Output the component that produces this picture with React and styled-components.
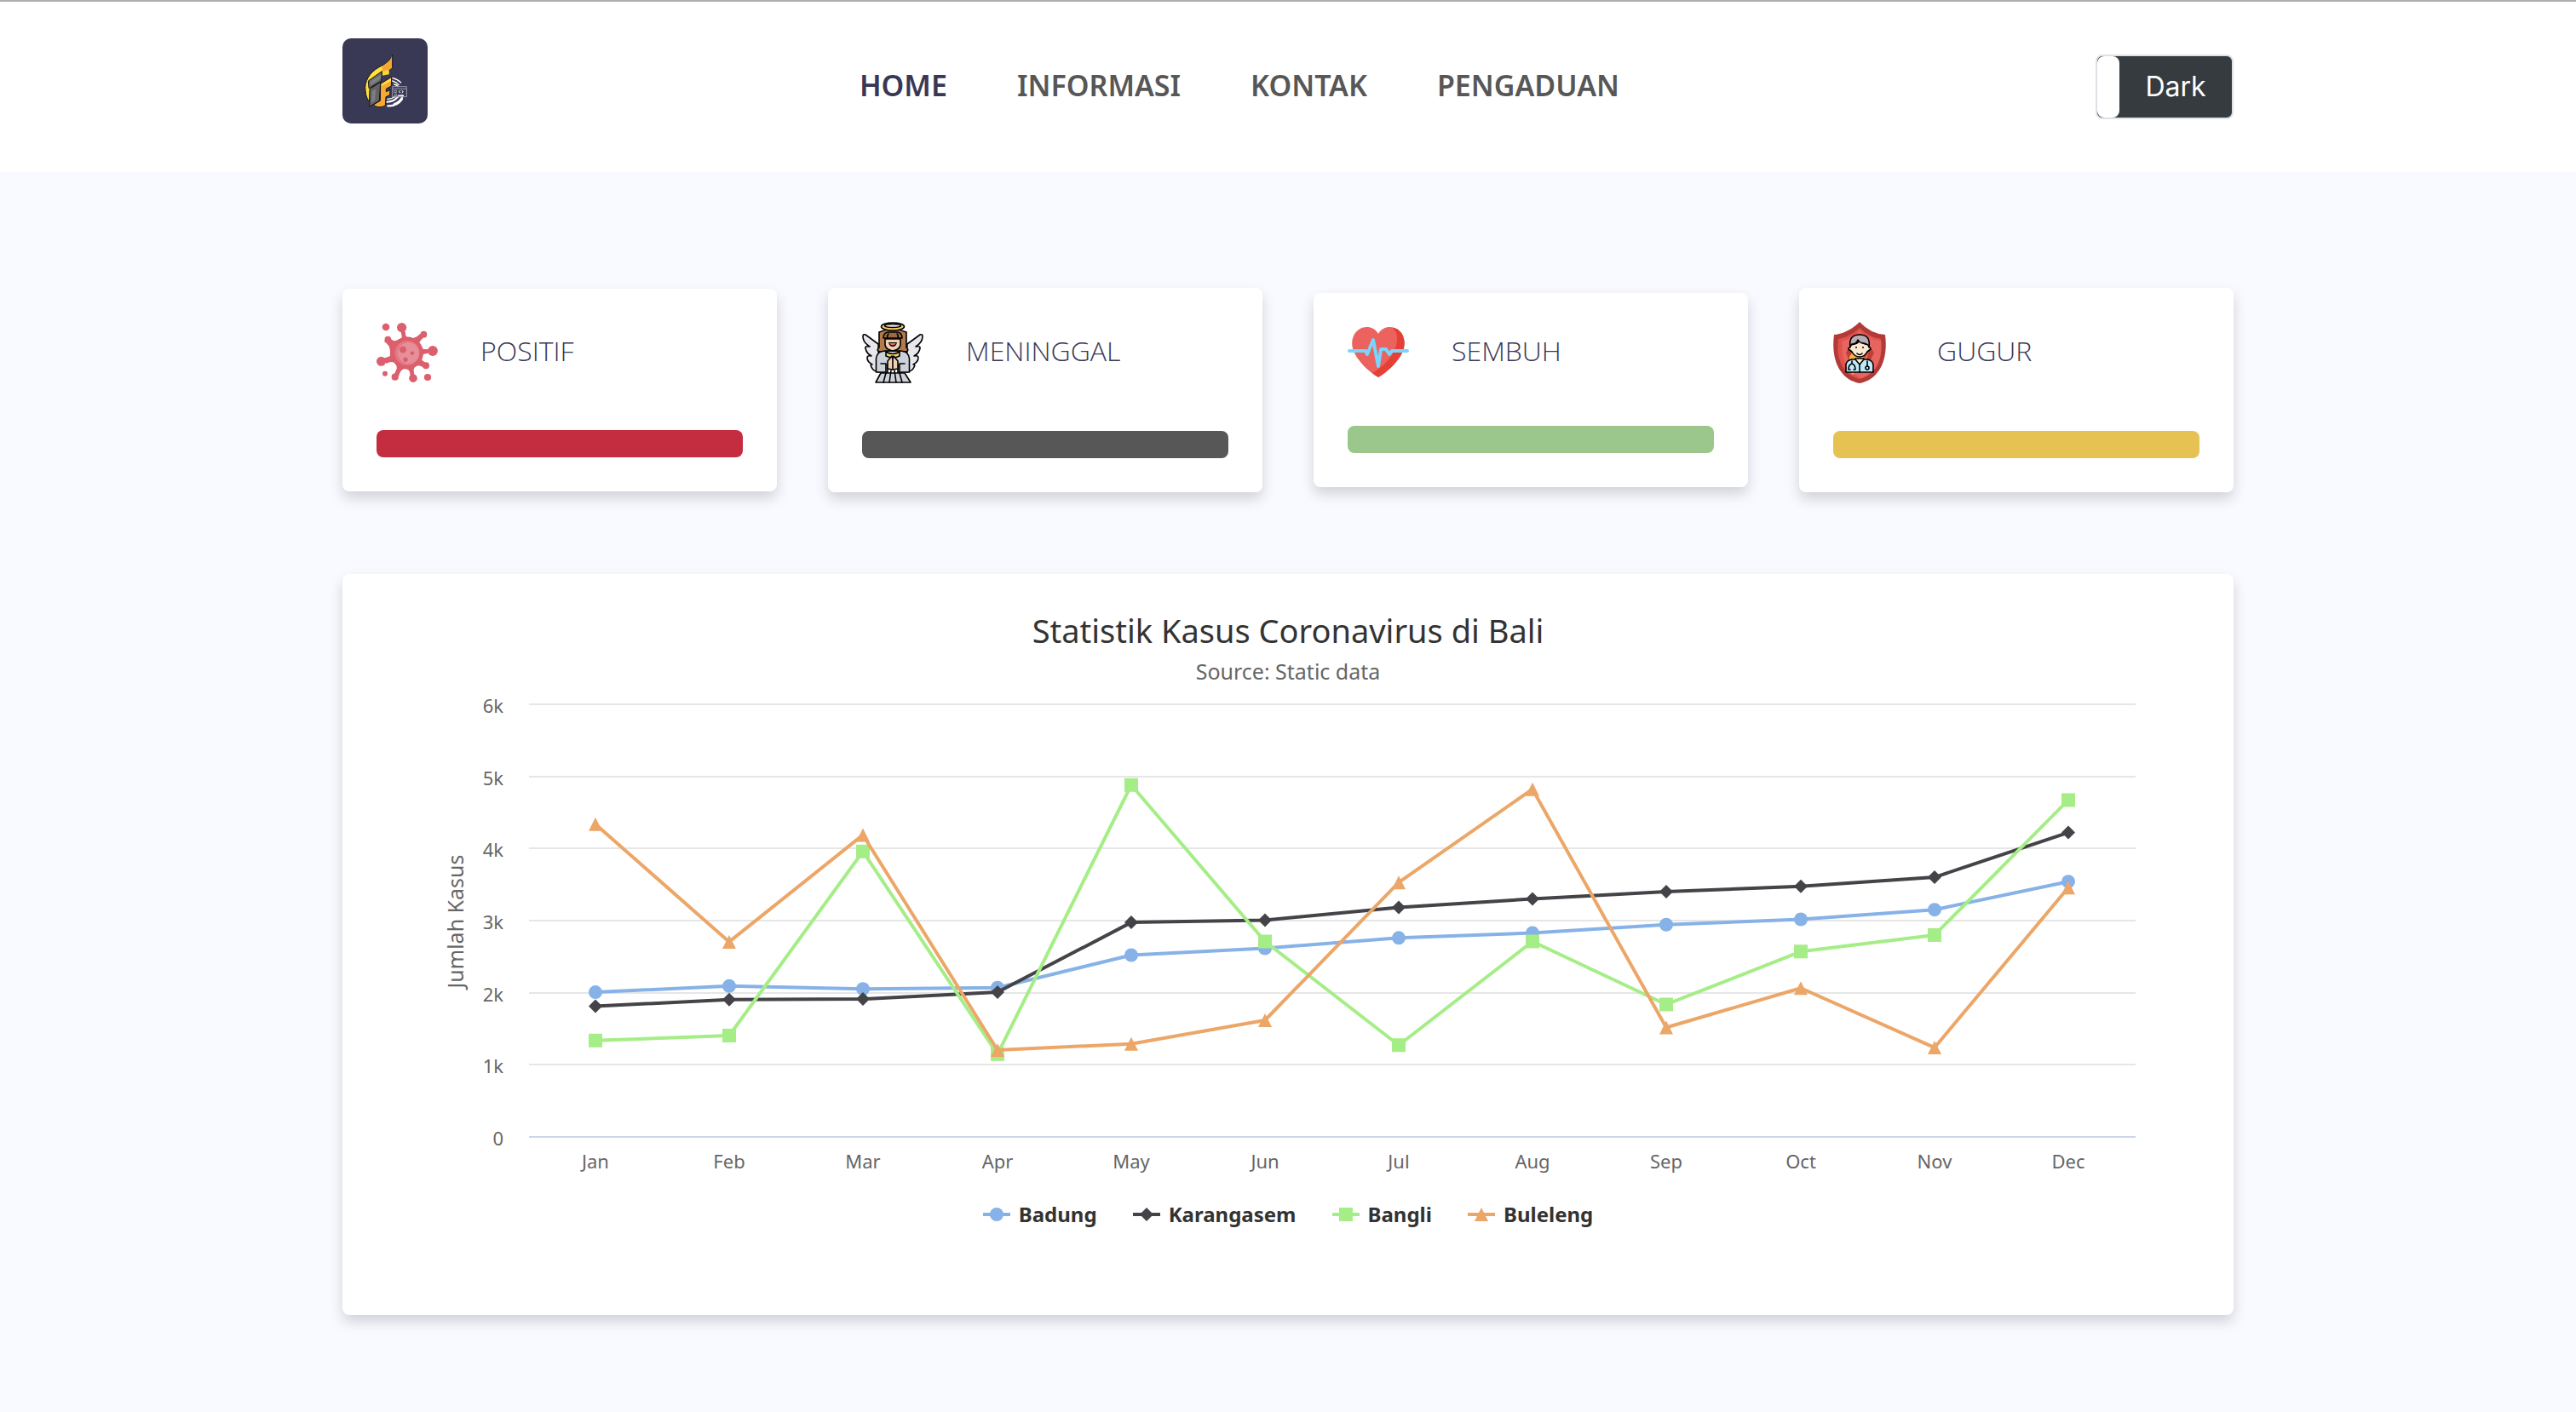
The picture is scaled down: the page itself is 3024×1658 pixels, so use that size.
import React, { useState } from "react";
import styled, { createGlobalStyle } from "styled-components";

const GlobalStyle = createGlobalStyle`
  *, *::before, *::after { box-sizing: border-box; }
  body {
    margin: 0;
    background: #f9faff;
    color: #333333;
    font-family: "Noto Sans", "Open Sans", sans-serif;
  }
  h1, h2, p, ul, figure { margin: 0; padding: 0; }
`;

const Header = styled.header`
  border-top: 2px solid #aeadb2;
  background: #ffffff;
`;

const Container = styled.div`
  width: 100%;
  max-width: 2280px;
  margin: 0 auto;
  padding: 0 30px;
`;

const Bar = styled(Container)`
  min-height: 200px;
  display: flex;
  align-items: center;
  justify-content: space-between;
`;

const Brand = styled.a`
  display: block;
  padding-bottom: 14px;
  line-height: 0;
`;

const Nav = styled.nav`
  display: flex;
  gap: 82px;
  padding: 0 52px 4px 0;
`;

const NavLink = styled.a`
  color: ${(p) => (p.$active ? "#383856" : "#575757")};
  font-size: 34px;
  font-weight: 600;
  line-height: 48px;
  text-decoration: none;
`;

const Toggle = styled.button`
  display: flex;
  align-items: stretch;
  width: 162px;
  height: 76px;
  padding: 0;
  overflow: hidden;
  border: 2px solid #dee2e6;
  border-radius: 8px;
  background: #363b3f;
  color: #ffffff;
  font-family: Inter, Roboto, sans-serif;
  font-size: 32px;
  line-height: 72px;
  cursor: pointer;
`;

const Knob = styled.span`
  width: 26px;
  border-radius: 8px;
  background: #ffffff;
`;

const ToggleText = styled.span`
  flex: 1;
  text-align: center;
`;

const Main = styled(Container).attrs({ as: "main" })`
  display: flex;
  flex-direction: column;
  gap: 96px;
  padding-top: 136px;
  padding-bottom: 114px;
`;

const Cards = styled.section`
  display: grid;
  grid-template-columns: repeat(4, 1fr);
  align-items: center;
  gap: 60px;
`;

const Panel = styled.div`
  border-radius: 8px;
  background: #ffffff;
  box-shadow: 0 8px 16px rgba(0, 0, 0, 0.16);
`;

const Card = styled(Panel)`
  display: grid;
  gap: 56px;
  padding: 40px;
`;

const CardHead = styled.div`
  display: grid;
  grid-template-columns: 122px 1fr;
  align-items: center;

  svg { display: block; }
`;

const CardTitle = styled.h2`
  padding-bottom: 4px;
  color: #383856;
  font-family: "Open Sans", "Noto Sans", sans-serif;
  font-size: 32px;
  font-weight: 300;
  line-height: 48px;
`;

const Strip = styled.div`
  height: 32px;
  border-radius: 8px;
  background: ${(p) => p.$color};
`;

const ChartPanel = styled(Panel).attrs({ as: "figure" })`
  padding: 42px 0 102px;
  text-align: center;
`;

const ChartTitle = styled.h1`
  font-size: 38px;
  font-weight: 400;
  line-height: 48px;
`;

const ChartSubtitle = styled.p`
  margin-top: 8px;
  color: #666666;
  font-size: 25px;
  line-height: 32px;
`;

const Plot = styled.svg`
  display: block;
  width: 100%;
  height: auto;
  font-size: 22px;
  fill: #666666;
`;

const Legend = styled.ul`
  display: flex;
  justify-content: center;
  gap: 42px;
  list-style: none;
`;

const LegendButton = styled.button`
  display: flex;
  align-items: center;
  gap: 10px;
  padding: 0;
  border: 0;
  background: none;
  color: #333333;
  font-family: inherit;
  font-size: 24px;
  font-weight: 700;
  line-height: 32px;
  opacity: ${(p) => (p.$off ? 0.4 : 1)};
  cursor: pointer;
`;

function Logo() {
  return (
    <svg width="100" height="100" viewBox="0 0 300 300" role="img" aria-label="Logo">
      <rect width="300" height="300" rx="30" fill="#3a3955" />
      <g fill="none" stroke="#ffffff" strokeLinecap="round">
        <path d="M176 140q18 4 30 16M176 150q14 4 22 14M182 162q10 2 14 8" strokeWidth="4" />
        <path d="M157 224q24-2 34-14t22-8q-8 20-32 30" strokeWidth="6" />
        <path d="M160 238q32 2 50-24" strokeWidth="7" />
        <path d="M158 214q16 0 30-10" strokeWidth="4" />
      </g>
      <g fill="none" stroke="#9b9aac" strokeWidth="3">
        <path d="M176 170h50v36h-50zM176 178h50M182 184h8v7h-8zM180 206l8-12 6 12M195 200h14" />
        <path d="M204 184l-5 4 5 4M209 184l5 4-5 4" stroke="#ffffff" />
      </g>
      <g stroke="#15141c" strokeWidth="3" strokeLinejoin="round">
        <path d="M176 58c-6 20-26 34-48 44-32 18-52 50-47 82 1 18 6 30 14 40l2-40 38-64h30l1-12 10-6z" fill="#ffe33b" />
        <path d="M174 62v42l-8 6-26 8v-20c18-8 30-20 34-36z" fill="#f6a833" stroke="none" />
        <path d="M140 116h25l-1 11-24 4z" fill="#fbd738" stroke="none" />
        <path d="M134 160l39-24-1 32-18 10v10l14-6-1 18-14 6-2 30c-12 9-34 8-42-2l24-14z" fill="#f6a833" />
        <path d="M137 162l34-22v10l-34 18z" fill="#ffe33b" stroke="none" />
        <path d="M91 150l48-34-2 34-44 26z" fill="#6b6b6e" />
        <path d="M96 178l38-24-4 66-35 21z" fill="#626265" />
        <path d="M102 150l34-22v12l-38 26zM104 186l14-8-4 42-12 8z" fill="#8a8a8c" stroke="none" opacity=".7" />
      </g>
    </svg>
  );
}

function VirusIcon() {
  return (
    <svg width="72" height="70" viewBox="0 0 72 70" aria-hidden="true">
      <path
        d="M36 35 30 6M36 35 55 14M36 35 66 33M36 35 58 50M36 35 43 65M36 35 22 63M36 35 6 45M36 35 14 20"
        stroke="#db5f6c"
        strokeWidth="4.6"
        strokeLinecap="round"
      />
      <g fill="#db5f6c">
        <path d="M28 19q4-3 2-8l4 0q-1 6 5 7 7 1 12-5l4 4q-7 5-4 10 2 5 9 4v5q-8 0-8 6 1 4 7 6l-3 5q-7-5-11-1-3 3 0 12h-5q0-10-6-10t-8 9l-5-2q5-8 1-13-3-4-11 0l-1-5q7-1 6-9 0-8-7-12l3-4q8 6 15 1z" />
        <circle cx="36" cy="35.5" r="19" />
        <circle cx="11" cy="5" r="4.3" />
        <circle cx="29.6" cy="5.6" r="5.6" />
        <circle cx="55.4" cy="13.7" r="3.9" />
        <circle cx="66" cy="33" r="5.9" />
        <circle cx="58" cy="50.3" r="4" />
        <circle cx="60" cy="64" r="4.1" />
        <circle cx="43" cy="65.2" r="4.8" />
        <circle cx="21.7" cy="63.7" r="4.1" />
        <circle cx="10" cy="59.7" r="3" />
        <circle cx="5.5" cy="45.3" r="5.5" />
        <circle cx="13.4" cy="19.7" r="3.9" />
      </g>
      <circle cx="36" cy="35.5" r="14.6" fill="#e27883" />
      <circle cx="37.5" cy="35.5" r="12.5" fill="#e78f98" />
      <g fill="#db5f6c">
        <circle cx="31" cy="31.6" r="3.9" />
        <circle cx="42" cy="35.7" r="2.3" />
        <circle cx="34" cy="43.3" r="2.7" />
      </g>
    </svg>
  );
}

function AngelIcon() {
  return (
    <svg width="72" height="72" viewBox="0 0 72 72" aria-hidden="true">
      <g stroke="#000000" strokeWidth="1.6" strokeLinejoin="round" strokeLinecap="round">
        <path d="M19 26 4 15q-3-1-3 2 0 7 8 12-6-1-5 2 1 6 7 9-5-1-5 2 0 5 6 8-3 0-1 3 2 5 9 6z" fill="#e7e7ec" />
        <path d="M53 26 68 15q3-1 3 2 0 7-8 12 6-1 5 2-1 6-7 9 5-1 5 2 0 5-6 8 3 0 1 3-2 5-9 6z" fill="#e7e7ec" />
        <path d="M22 60h28l7 11H16z" fill="#cdd2da" />
        <path d="M28 60l-3 11M44 60l3 11M34 57l-2 14M38 57l2 14" fill="none" />
        <path d="M16.500 59V43q1-8 9-9h21q8 1 9 9v16H42V50H30v9z" fill="#cdd2da" />
        <path d="M20 12q16-7 32 0v18q4 4-1 5l-6-1H27l-6 1q-5-1-1-5z" fill="#b27a4d" />
        <path d="M27 20h18v7q-1 6-9 7-8-1-9-7z" fill="#efd0b4" />
        <path d="M25 19q0-6 5-7h12q5 1 5 7z" fill="#9c6a42" />
        <path d="M30 19q-1-3 1-5M42 19q1-3-1-5" fill="none" />
        <path d="M28 35q8 5 16 0v5q-8 4-16 0z" fill="#f4cf62" />
        <path d="M30 55V46l5-6 1 3 1-3 5 6v9l-6 1z" fill="#efd0b4" />
        <path d="M36 43v12M22 49h6v9M50 49h-6v9" fill="none" />
        <ellipse cx="36" cy="5.5" rx="13.5" ry="4.5" fill="#f6cf65" />
        <ellipse cx="36" cy="4.5" rx="9.500" ry="2" fill="#e7e7ec" />
      </g>
      <path d="M31 24h10q-1 5-5 5t-5-5z" fill="#000000" />
      <path d="M32 25h8q-4 5-8 0z" fill="#ef6b5a" />
    </svg>
  );
}

function HeartIcon() {
  return (
    <svg width="72" height="60" viewBox="0 0 72 60" aria-hidden="true">
      <path d="M36 8C31-1 20-2 13 3 6 8 3 18 7 28c4 11 18 25 29 31 11-6 25-20 29-31 4-10 1-20-6-25C52-2 41-1 36 8z" fill="#ec625e" />
      <path d="M53 .7c3 .3 6 1.400 8 4 6 5 7 15 4 23.300-4 11-18 25-29 31-2-1-4-3-7-5C48 43 62 24 57 7z" fill="#e34137" />
      <path d="M2 28h19l2 4 7-17L36 46l3-20h6l4 6 3-4h18" fill="none" stroke="#7bd4fc" strokeWidth="4" strokeLinejoin="round" strokeLinecap="round" />
    </svg>
  );
}

function ShieldIcon() {
  return (
    <svg width="62" height="72" viewBox="0 0 62 72" aria-hidden="true">
      <path d="M31 0Q44 14 61 15C65 46 53 68 31 72 9 68-3 46 1 15 18 14 31 0 31 0z" fill="#b23a37" />
      <path d="M31 7Q42 18 56 20C59 45 50 62 31 67 12 62 3 45 6 20 20 18 31 7 31 7z" fill="#e2524d" />
      <path d="M31 10Q42 21 56 22C58 45 50 61 33 66 16 58 8 45 11 22 22 20 31 10 31 10z" fill="#e7645f" />
      <path d="M15 36l5-8h22l6 8-6 13H20z" fill="#c23c38" />
      <path d="M19 41l4-6 16 8 3-8-5 9H19zM21 60h4l-2 2z" fill="#f5b63e" />
      <g stroke="#000000" strokeWidth="1.6" strokeLinejoin="round" strokeLinecap="round">
        <path d="M15 59V50q1-5 7-6h18q6 1 7 6v9z" fill="#bfeaf8" />
        <path d="M26 43h10v1l-5 6-5-6z" fill="#fbe8d3" />
        <path d="M20 27q10-1 11-6 1 4 11 6v3q2 0 2 2l-4 3q-3 6-9 6-6 0-9-6l-4-3q0-2 2-2z" fill="#fbe8d3" />
        <path d="M20 29q-2-14 11-14Q44 15 42 29q-1-3-6-4-5 0-7-4-2 5-7 5z" fill="#b8acb3" />
        <path d="M31 50v9M22 46v3q-4 1-4 7h2M22 49q4 1 4 7h-2M40 46v6" fill="none" />
        <circle cx="40" cy="54" r="2" fill="#bfeaf8" />
        <path d="M28 37q3 3 6 0" fill="none" />
      </g>
      <circle cx="27" cy="30" r="1" />
      <circle cx="35" cy="30" r="1" />
    </svg>
  );
}

const NAV = ["HOME", "INFORMASI", "KONTAK", "PENGADUAN"];

const STATS = [
  { title: "POSITIF", color: "#c42c3f", Icon: VirusIcon },
  { title: "MENINGGAL", color: "#575757", Icon: AngelIcon },
  { title: "SEMBUH", color: "#9bc78d", Icon: HeartIcon },
  { title: "GUGUR", color: "#e5c251", Icon: ShieldIcon },
];

const MONTHS = ["Jan", "Feb", "Mar", "Apr", "May", "Jun", "Jul", "Aug", "Sep", "Oct", "Nov", "Dec"];

const SERIES = [
  { name: "Badung", color: "#87b2e8", shape: "circle", data: [2007, 2093, 2053, 2070, 2522, 2616, 2760, 2829, 2944, 3018, 3151, 3541] },
  { name: "Karangasem", color: "#434348", shape: "diamond", data: [1813, 1904, 1912, 2007, 2975, 3006, 3184, 3301, 3402, 3475, 3602, 4222] },
  { name: "Bangli", color: "#a5ed86", shape: "square", data: [1337, 1406, 3959, 1148, 4881, 2711, 1273, 2711, 1837, 2571, 2800, 4672] },
  { name: "Buleleng", color: "#eca667", shape: "triangle", data: [4337, 2706, 4188, 1205, 1290, 1618, 3530, 4823, 1518, 2064, 1239, 3458] },
];

const LEFT = 219;
const RIGHT = 2105;
const TOP = 23;
const BOTTOM = 531;
const STEP = (RIGHT - LEFT) / MONTHS.length;
const xOf = (i) => Math.floor(LEFT + STEP * (i + 0.5));
const yOf = (v) => BOTTOM - (v / 6000) * (BOTTOM - TOP);

function Marker({ shape, color, x, y }) {
  if (shape === "circle") return <circle cx={x} cy={y} r="8" fill={color} />;
  if (shape === "square") return <rect x={x - 8} y={y - 8} width="16" height="16" fill={color} />;
  const points =
    shape === "diamond"
      ? `${x},${y - 8} ${x + 8},${y} ${x},${y + 8} ${x - 8},${y}`
      : `${x},${y - 8} ${x + 8},${y + 8} ${x - 8},${y + 8}`;
  return <polygon points={points} fill={color} />;
}

function LineChart({ series }) {
  return (
    <Plot viewBox="0 0 2220 606" role="img" aria-label="Jumlah kasus per bulan">
      {[0, 1, 2, 3, 4, 5, 6].map((k) => {
        const y = Math.round(yOf(k * 1000));
        return (
          <g key={k}>
            <line x1={LEFT} x2={RIGHT} y1={y} y2={y} stroke={k ? "#e6e6e6" : "#ccd6eb"} strokeWidth="2" />
            <text x="189" y={y + 10} textAnchor="end">{k ? `${k}k` : "0"}</text>
          </g>
        );
      })}
      {MONTHS.map((m, i) => (
        <text key={m} x={xOf(i)} y="568" textAnchor="middle">{m}</text>
      ))}
      <text transform="translate(142 278) rotate(-90)" textAnchor="middle" fontSize="25">Jumlah Kasus</text>
      {series.map((s) => (
        <g key={s.name}>
          <polyline
            points={s.data.map((v, i) => `${xOf(i)},${yOf(v)}`).join(" ")}
            fill="none"
            stroke={s.color}
            strokeWidth="4"
            strokeLinejoin="round"
            strokeLinecap="round"
          />
          {s.data.map((v, i) => (
            <Marker key={i} shape={s.shape} color={s.color} x={xOf(i)} y={yOf(v)} />
          ))}
        </g>
      ))}
    </Plot>
  );
}

export default function App() {
  const [dark, setDark] = useState(true);
  const [hidden, setHidden] = useState([]);
  const flip = (name) =>
    setHidden((h) => (h.includes(name) ? h.filter((n) => n !== name) : [...h, name]));

  return (
    <>
      <GlobalStyle />
      <Header>
        <Bar>
          <Brand href="#home"><Logo /></Brand>
          <Nav>
            {NAV.map((item, i) => (
              <NavLink key={item} href={`#${item.toLowerCase()}`} $active={i === 0}>{item}</NavLink>
            ))}
          </Nav>
          <Toggle type="button" aria-pressed={dark} onClick={() => setDark(!dark)}>
            <Knob />
            <ToggleText>Dark</ToggleText>
          </Toggle>
        </Bar>
      </Header>
      <Main>
        <Cards>
          {STATS.map(({ title, color, Icon }) => (
            <Card key={title}>
              <CardHead>
                <Icon />
                <CardTitle>{title}</CardTitle>
              </CardHead>
              <Strip $color={color} />
            </Card>
          ))}
        </Cards>
        <ChartPanel>
          <ChartTitle>Statistik Kasus Coronavirus di Bali</ChartTitle>
          <ChartSubtitle>Source: Static data</ChartSubtitle>
          <LineChart series={SERIES.filter((s) => !hidden.includes(s.name))} />
          <Legend>
            {SERIES.map((s) => (
              <li key={s.name}>
                <LegendButton type="button" $off={hidden.includes(s.name)} onClick={() => flip(s.name)}>
                  <svg width="32" height="16" viewBox="0 0 32 16" aria-hidden="true">
                    <path d="M0 8h32" stroke={s.color} strokeWidth="4" />
                    <Marker shape={s.shape} color={s.color} x={16} y={8} />
                  </svg>
                  {s.name}
                </LegendButton>
              </li>
            ))}
          </Legend>
        </ChartPanel>
      </Main>
    </>
  );
}
